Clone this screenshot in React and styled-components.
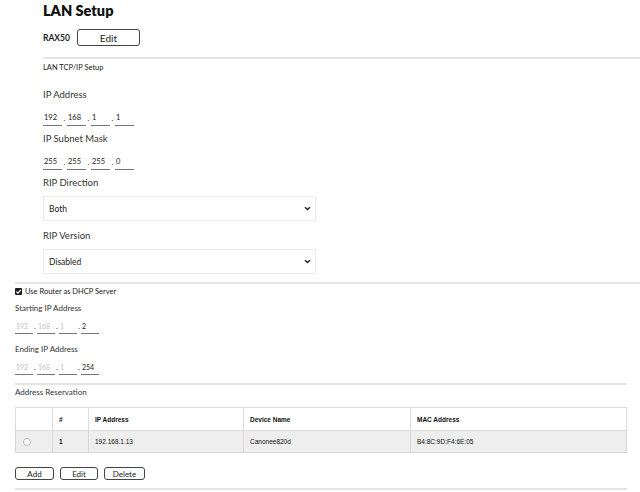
import React from 'react'
import styled, { createGlobalStyle } from 'styled-components'

const Global = createGlobalStyle`
  body {
    margin: 0;
    background: #fff;
    font-family: Lato, "Open Sans", sans-serif;
    color: #222;
  }
`

const IpField = ({ values, disabledCount = 0, small }) => (
	<IpRow $small={small}>
		{values.map((v, i) => (
			<React.Fragment key={i}>
				{i > 0 && <Dot $small={small}>.</Dot>}
				<Octet $small={small} $muted={i < disabledCount}>{v}</Octet>
			</React.Fragment>
		))}
	</IpRow>
)

const Chevron = () => (
	<svg width="7" height="5" viewBox="0 0 7 5">
		<path d="M1 1.2 L3.5 3.6 L6 1.2" fill="none" stroke="#222" strokeWidth="1.4" />
	</svg>
)

const App = () => {
	return (
		<Page>
			<Global />
			<Top>
				<Title>LAN Setup</Title>
				<ModelRow>
					<Model>RAX50</Model>
					<OutlineButton $w={63} $h={17} $fs={10}>Edit</OutlineButton>
				</ModelRow>
				<Divider $mt={11} />
				<SectionLabel>LAN TCP/IP Setup</SectionLabel>
				<FieldLabel $mt={14}>IP Address</FieldLabel>
				<IpField values={['192', '168', '1', '1']} />
				<FieldLabel>IP Subnet Mask</FieldLabel>
				<IpField values={['255', '255', '255', '0']} />
				<FieldLabel>RIP Direction</FieldLabel>
				<Select>
					<span>Both</span>
					<Chevron />
				</Select>
				<FieldLabel $mt={8}>RIP Version</FieldLabel>
				<Select>
					<span>Disabled</span>
					<Chevron />
				</Select>
			</Top>
			<Divider $mt={8} $ml={15} />
			<Bottom>
				<CheckRow>
					<CheckBox>
						<svg width="7" height="7" viewBox="0 0 7 7">
							<path d="M1.3 3.6 L2.9 5.1 L5.8 1.8" fill="none" stroke="#fff" strokeWidth="1.2" />
						</svg>
					</CheckBox>
					Use Router as DHCP Server
				</CheckRow>
				<SmallLabel $mt={4}>Starting IP Address</SmallLabel>
				<IpField small values={['192', '168', '1', '2']} disabledCount={3} />
				<SmallLabel $mt={8}>Ending IP Address</SmallLabel>
				<IpField small values={['192', '168', '1', '254']} disabledCount={3} />
			</Bottom>
			<Divider $mt={8} $ml={15} $mr={13} />
			<Bottom>
				<SmallLabel $mt={0}>Address Reservation</SmallLabel>
				<Table>
					<colgroup>
						<col style={{ width: 37 }} />
						<col style={{ width: 36 }} />
						<col style={{ width: 155 }} />
						<col style={{ width: 167 }} />
						<col />
					</colgroup>
					<thead>
						<tr>
							<Th></Th>
							<Th>#</Th>
							<Th>IP Address</Th>
							<Th>Device Name</Th>
							<Th>MAC Address</Th>
						</tr>
					</thead>
					<tbody>
						<tr>
							<Td><Radio /></Td>
							<Td $bold>1</Td>
							<Td>192.168.1.13</Td>
							<Td>Canonee820d</Td>
							<Td>B4:8C:9D:F4:6E:05</Td>
						</tr>
					</tbody>
				</Table>
				<ButtonRow>
					<OutlineButton $w={39} $h={13} $fs={8}>Add</OutlineButton>
					<OutlineButton $w={38} $h={13} $fs={8}>Edit</OutlineButton>
					<OutlineButton $w={41} $h={13} $fs={8}>Delete</OutlineButton>
				</ButtonRow>
			</Bottom>
			<Divider $mt={8} $ml={15} $mr={13} />
		</Page>
	)
}

const Page = styled.div`
	width: 640px;
	height: 492px;
	overflow: hidden;
`

const Top = styled.div`
	padding-left: 43px;
	display: flex;
	flex-direction: column;
`

const Bottom = styled.div`
	padding: 0 13px 0 15px;
	display: flex;
	flex-direction: column;
`

const Title = styled.h1`
	margin: 1px 0 0;
	font-size: 14.5px;
	line-height: 20px;
	font-weight: 800;
	color: #111;
`

const ModelRow = styled.div`
	display: flex;
	align-items: center;
	gap: 7px;
	margin-top: 8px;
	height: 17px;
`

const Model = styled.span`
	font-size: 8.5px;
	font-weight: 700;
	color: #222;
`

const OutlineButton = styled.button`
	width: ${p => p.$w}px;
	height: ${p => p.$h}px;
	padding: 0;
	border: 1px solid #444;
	border-radius: 3px;
	background: #fff;
	font-family: Lato, sans-serif;
	font-size: ${p => p.$fs}px;
	color: #222;
	display: flex;
	align-items: center;
	justify-content: center;
`

const Divider = styled.div`
	margin: ${p => p.$mt || 0}px ${p => p.$mr || 0}px 0 ${p => p.$ml || 0}px;
	border-top: 2px solid #e4e4e4;
`

const SectionLabel = styled.div`
	margin-top: 3px;
	font-size: 7.5px;
	line-height: 12px;
	color: #222;
`

const FieldLabel = styled.div`
	margin-top: ${p => p.$mt ?? 6}px;
	font-size: 9.5px;
	line-height: 14px;
	color: #333;
`

const SmallLabel = styled.div`
	margin-top: ${p => p.$mt ?? 7}px;
	font-size: 8px;
	line-height: 14px;
	color: #333;
`

const IpRow = styled.div`
	display: flex;
	align-items: flex-end;
	margin-top: ${p => (p.$small ? 2 : 7)}px;
	height: 17px;
`

const Octet = styled.span`
	width: ${p => (p.$small ? 18 : 19)}px;
	height: ${p => (p.$small ? 15 : 16)}px;
	box-sizing: border-box;
	border-bottom: 1px solid #777;
	font-size: ${p => (p.$small ? 7 : 7.5)}px;
	line-height: ${p => (p.$small ? 15 : 16)}px;
	padding-left: 1px;
	color: ${p => (p.$muted ? '#c4c4c4' : '#222')};
`

const Dot = styled.span`
	width: ${p => (p.$small ? 4 : 5)}px;
	font-size: 8px;
	line-height: 16px;
	text-align: center;
	height: 16px;
	color: #333;
`

const Select = styled.div`
	margin-top: 6px;
	width: 273px;
	height: 25px;
	box-sizing: border-box;
	border: 1px solid #ececec;
	display: flex;
	align-items: center;
	justify-content: space-between;
	padding: 0 4px 0 5px;
	font-size: 8.5px;
	color: #222;
`

const CheckRow = styled.div`
	margin-top: 1px;
	display: flex;
	align-items: center;
	gap: 3px;
	height: 12px;
	font-size: 7.5px;
	color: #222;
`

const CheckBox = styled.span`
	width: 7px;
	height: 7px;
	background: #1f1f1f;
	display: flex;
	border-radius: 1px;
`

const Table = styled.table`
	margin-top: 8px;
	width: 612px;
	border-collapse: collapse;
	table-layout: fixed;
	font-family: "Liberation Sans", Arial, sans-serif;
	font-size: 6.5px;
	color: #111;

	tbody tr {
		background: #eeeeee;
	}
`

const Th = styled.th`
	height: 22px;
	border: 1px solid #dcdcdc;
	text-align: left;
	padding: 0 0 0 6px;
	font-weight: 700;
`

const Td = styled.td`
	height: 21px;
	border: 1px solid #d6d6d6;
	padding: 0 0 0 6px;
	font-weight: ${p => (p.$bold ? 700 : 400)};
`

const Radio = styled.span`
	display: block;
	margin-left: 1px;
	width: 6px;
	height: 6px;
	border: 1px solid #b8b8b8;
	border-radius: 50%;
	background: #fff;
`

const ButtonRow = styled.div`
	margin-top: 14px;
	display: flex;
	gap: 6px;
`

export default App
